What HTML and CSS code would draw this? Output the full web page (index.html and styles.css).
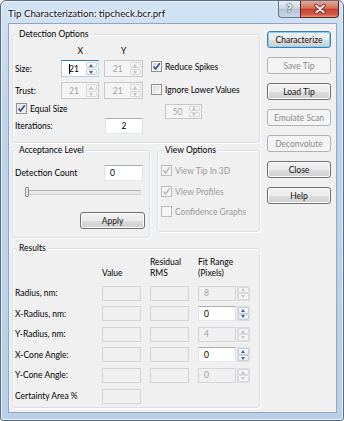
FILE: index.html
```html
<!DOCTYPE html>
<html lang="en">
<head>
    <meta charset="UTF-8">
    <meta name="viewport" content="width=device-width, initial-scale=1.0">
    <title>Tip Characterization</title>
    <link rel="stylesheet" href="styles.css">
</head>
<body>
    <div class="window">
        <div class="titlebar">
            <span class="title">Tip Characterization: tipcheck.bcr.prf</span>
            <div class="caption-buttons">
                <span class="cap-help">?</span>
                <span class="cap-close">
                    <svg width="14" height="10" viewBox="0 0 14 10">
                        <path d="M3 1.5 L11 8.5 M11 1.5 L3 8.5" stroke="#5a1a14" stroke-width="3.4" stroke-linecap="round"/>
                        <path d="M3 1.5 L11 8.5 M11 1.5 L3 8.5" stroke="#ffffff" stroke-width="1.8" stroke-linecap="round"/>
                    </svg>
                </span>
            </div>
        </div>

        <div class="client">
            <div class="main">
                <!-- detection options -->
                <div class="group detection">
                    <div class="group-title">Detection Options</div>
                    <div class="det-body">
                        <div class="det-left">
                            <div class="axis-row">
                                <span class="axis">X</span>
                                <span class="axis">Y</span>
                            </div>
                            <div class="row size-row">
                                <span class="label">Size:</span>
                                <div class="spin focused">
                                    <span class="spin-text"><span class="caret"></span>21</span>
                                    <span class="arrows"><span class="up"></span><span class="down"></span></span>
                                </div>
                                <div class="spin disabled">
                                    <span class="spin-text">21</span>
                                    <span class="arrows"><span class="up"></span><span class="down"></span></span>
                                </div>
                            </div>
                            <div class="row trust-row">
                                <span class="label">Trust:</span>
                                <div class="spin disabled">
                                    <span class="spin-text">21</span>
                                    <span class="arrows"><span class="up"></span><span class="down"></span></span>
                                </div>
                                <div class="spin disabled">
                                    <span class="spin-text">21</span>
                                    <span class="arrows"><span class="up"></span><span class="down"></span></span>
                                </div>
                            </div>
                            <div class="check checked equal-check">
                                <span class="box"><svg width="9" height="9" viewBox="0 0 9 9"><path d="M1.5 4.5 L3.6 7 L7.8 1.2" fill="none" stroke="#3a4f86" stroke-width="1.6"/></svg></span>
                                Equal Size
                            </div>
                            <div class="row iter-row">
                                <span class="label">Iterations:</span>
                                <span class="edit centered">2</span>
                            </div>
                        </div>
                        <div class="det-right">
                            <div class="check checked">
                                <span class="box"><svg width="9" height="9" viewBox="0 0 9 9"><path d="M1.5 4.5 L3.6 7 L7.8 1.2" fill="none" stroke="#3a4f86" stroke-width="1.6"/></svg></span>
                                Reduce Spikes
                            </div>
                            <div class="check ignore-check">
                                <span class="box"></span>
                                Ignore Lower Values
                            </div>
                            <div class="spin disabled low-spin">
                                <span class="spin-text">50</span>
                                <span class="arrows"><span class="up"></span><span class="down"></span></span>
                            </div>
                        </div>
                    </div>
                </div>

                <div class="middle">
                    <!-- acceptance level -->
                    <div class="group acceptance">
                        <div class="group-title">Acceptance Level</div>
                        <div class="row count-row">
                            <span class="label">Detection Count</span>
                            <span class="edit">0</span>
                        </div>
                        <div class="slider">
                            <span class="thumb"></span>
                        </div>
                        <div class="btn apply">Apply</div>
                    </div>

                    <!-- view options -->
                    <div class="group view">
                        <div class="group-title">View Options</div>
                        <div class="check checked disabled">
                            <span class="box"><svg width="9" height="9" viewBox="0 0 9 9"><path d="M1.5 4.5 L3.6 7 L7.8 1.2" fill="none" stroke="#b4b4b4" stroke-width="1.4"/></svg></span>
                            View Tip In 3D
                        </div>
                        <div class="check checked disabled">
                            <span class="box"><svg width="9" height="9" viewBox="0 0 9 9"><path d="M1.5 4.5 L3.6 7 L7.8 1.2" fill="none" stroke="#b4b4b4" stroke-width="1.4"/></svg></span>
                            View Profiles
                        </div>
                        <div class="check disabled">
                            <span class="box"></span>
                            Confidence Graphs
                        </div>
                    </div>
                </div>

                <!-- results -->
                <div class="group results">
                    <div class="group-title">Results</div>
                    <div class="results-grid">
                        <span></span>
                        <span class="col-head">Value</span>
                        <span class="col-head">Residual<br>RMS</span>
                        <span class="col-head fit-head">Fit Range<br>(Pixels)</span>

                        <span class="label">Radius, nm:</span>
                        <span class="edit disabled"></span>
                        <span class="edit disabled"></span>
                        <span class="edit disabled">8</span>
                        <span class="arrows solo disabled"><span class="up"></span><span class="down"></span></span>

                        <span class="label">X-Radius, nm:</span>
                        <span class="edit disabled"></span>
                        <span class="edit disabled"></span>
                        <span class="edit">0</span>
                        <span class="arrows solo"><span class="up"></span><span class="down"></span></span>

                        <span class="label">Y-Radius, nm:</span>
                        <span class="edit disabled"></span>
                        <span class="edit disabled"></span>
                        <span class="edit disabled">4</span>
                        <span class="arrows solo disabled"><span class="up"></span><span class="down"></span></span>

                        <span class="label">X-Cone Angle:</span>
                        <span class="edit disabled"></span>
                        <span class="edit disabled"></span>
                        <span class="edit">0</span>
                        <span class="arrows solo"><span class="up"></span><span class="down"></span></span>

                        <span class="label">Y-Cone Angle:</span>
                        <span class="edit disabled"></span>
                        <span class="edit disabled"></span>
                        <span class="edit disabled">0</span>
                        <span class="arrows solo disabled"><span class="up"></span><span class="down"></span></span>

                        <span class="label">Certainty Area %</span>
                        <span class="edit disabled"></span>
                    </div>
                </div>
            </div>

            <div class="buttons">
                <div class="btn default">Characterize</div>
                <div class="btn disabled">Save Tip</div>
                <div class="btn">Load Tip</div>
                <div class="btn disabled">Emulate Scan</div>
                <div class="btn disabled">Deconvolute</div>
                <div class="btn">Close</div>
                <div class="btn">Help</div>
            </div>
        </div>
    </div>
</body>
</html>
```
FILE: styles.css
```css
* {
    box-sizing: border-box;
}

body {
    margin: 0;
    font-family: 'Lato', sans-serif;
    font-size: 8.5px;
    color: #000000;
    background-color: #ffffff;
}

/* window frame */

.window {
    width: 344px;
    height: 421px;
    border: 1px solid #5d6a7a;
    border-radius: 6px 6px 3px 3px;
    padding: 0 6px 7px 7px;
    background: linear-gradient(#d3e3f5, #bed4ec 25%, #b9d0e9 100%);
    box-shadow: inset 0 0 0 1px #e6f0fb;
}

.titlebar {
    height: 22px;
    display: flex;
    align-items: flex-start;
    justify-content: space-between;
}

.title {
    font-size: 9.7px;
    line-height: 12px;
    margin-top: 6px;
    color: #111111;
    text-shadow: 0 0 4px #ffffff, 0 0 2px #ffffff;
}

.caption-buttons {
    display: flex;
    margin-right: -2px;
}

.cap-help {
    width: 22px;
    height: 17px;
    border: 1px solid #6a7689;
    border-top: none;
    border-right: none;
    border-radius: 0 0 0 4px;
    background: linear-gradient(#e9eff6, #c8d5e4 50%, #b4c4d8 51%, #c9d7e6);
    color: #ffffff;
    font-family: 'DejaVu Sans', sans-serif;
    font-weight: bold;
    font-size: 10px;
    line-height: 15px;
    text-align: center;
    text-shadow: 0 0 1px #3f4a5c, 0 0 1px #3f4a5c, 0 0 2px #3f4a5c;
}

.cap-close {
    width: 39px;
    height: 17px;
    border: 1px solid #5c2620;
    border-top: none;
    border-radius: 0 0 4px 0;
    background: linear-gradient(#e7a596, #d0725f 45%, #c4412f 50%, #d45b44 85%, #e69a7e);
    display: flex;
    align-items: center;
    justify-content: center;
}

.client {
    height: 390px;
    border: 1px solid #8ea6c1;
    background-color: #f0f0f0;
    display: flex;
    padding: 0 5px 0 3px;
}

.main {
    width: 248px;
    padding-top: 10px;
}

.buttons {
    margin-left: 7px;
    width: 64px;
    padding-top: 7px;
    display: flex;
    flex-direction: column;
    gap: 9px;
}

/* group boxes */

.group {
    border: 1px solid #d5dfe5;
    border-radius: 3px;
    box-shadow: inset 1px 1px 0 #ffffff, 1px 1px 0 #ffffff;
    padding: 0 2px;
}

.group-title {
    width: fit-content;
    height: 12px;
    line-height: 12px;
    margin: -7px 0 0 2px;
    padding: 0 2px;
    background-color: #f0f0f0;
}

.detection {
    height: 109px;
}

.det-body {
    display: flex;
    align-items: flex-start;
}

.det-left {
    width: 128px;
    padding-top: 5px;
}

.det-right {
    margin-left: 8px;
    padding-top: 20px;
}

.axis-row {
    display: flex;
    gap: 5px;
    padding-left: 46px;
    height: 12px;
    line-height: 12px;
}

.axis {
    width: 39px;
    text-align: center;
}

.row {
    display: flex;
    align-items: center;
}

.label {
    width: 46px;
    white-space: nowrap;
}

.size-row {
    margin-top: 3px;
    height: 17px;
}

.size-row .spin + .spin,
.trust-row .spin + .spin {
    margin-left: 5px;
}

.trust-row {
    margin-top: 5px;
    height: 17px;
}

.equal-check {
    margin-top: 3px;
    margin-left: 1px;
}

.iter-row {
    margin-top: 3px;
    height: 16px;
}

.iter-row .label {
    width: 90px;
}

.iter-row .edit {
    width: 38px;
    height: 16px;
}

.ignore-check {
    margin-top: 10px;
}

.low-spin {
    margin: 8px 0 0 14px;
    height: 15px !important;
    width: 37px !important;
}

/* inputs */

.spin {
    width: 39px;
    height: 17px;
    display: flex;
    border: 1px solid;
    border-color: #abadb3 #dbdfe6 #e3e9ef #e2e3ea;
    background-color: #ffffff;
}

.spin.focused {
    border-color: #3d7bad #b7d9ed #b5cfe7 #a4c9e3;
}

.spin.disabled {
    border-color: #c6c8cb;
    background-color: #f4f4f4;
    color: #a3a3a3;
}

.spin-text {
    flex: 1;
    display: flex;
    align-items: center;
    justify-content: center;
}

.caret {
    width: 1px;
    height: 10px;
    background-color: #000000;
    margin-right: -1px;
}

.arrows {
    width: 12px;
    display: flex;
    flex-direction: column;
    gap: 1px;
    padding: 1px 1px 1px 0;
}

.arrows .up,
.arrows .down {
    flex: 1;
    border: 1px solid #c5d0dd;
    border-radius: 1px;
    background: linear-gradient(#fafbfd, #e6ebf2);
    position: relative;
}

.arrows .up::after,
.arrows .down::after {
    content: "";
    position: absolute;
    left: 50%;
    top: 50%;
    margin: -1.5px 0 0 -2.5px;
    border-left: 2.5px solid transparent;
    border-right: 2.5px solid transparent;
}

.arrows .up::after {
    border-bottom: 3px solid #4d6185;
}

.arrows .down::after {
    border-top: 3px solid #4d6185;
}

.spin.disabled .arrows .up,
.spin.disabled .arrows .down,
.arrows.disabled .up,
.arrows.disabled .down {
    border-color: #d9d9d9;
    background: #f4f4f4;
}

.spin.disabled .arrows .up::after,
.arrows.disabled .up::after {
    border-bottom-color: #c2c2c2;
}

.spin.disabled .arrows .down::after,
.arrows.disabled .down::after {
    border-top-color: #c2c2c2;
}

.arrows.solo {
    width: 13px;
    height: 15px;
    padding: 0;
    margin-left: -8px;
    border: 1px solid #d9dde3;
    background-color: #f4f4f4;
    gap: 0;
}

.edit {
    height: 15px;
    border: 1px solid;
    border-color: #abadb3 #dbdfe6 #e3e9ef #e2e3ea;
    background-color: #ffffff;
    display: flex;
    align-items: center;
    padding-left: 5px;
}

.edit.centered {
    justify-content: center;
    padding-left: 0;
}

.edit.disabled {
    border-color: #d3d4d6;
    background-color: #f0f0f0;
    color: #a3a3a3;
}

/* checkboxes */

.check {
    display: flex;
    align-items: center;
    height: 13px;
    gap: 3px;
    white-space: nowrap;
}

.check .box {
    width: 11px;
    height: 11px;
    border: 1px solid #8e8f8f;
    background: linear-gradient(135deg, #d6d6d6, #fbfbfb);
    box-shadow: inset 0 0 0 1px #f4f4f4;
    display: flex;
    align-items: center;
    justify-content: center;
}

.check.disabled {
    color: #9a9a9a;
}

.check.disabled .box {
    border-color: #bdbdbd;
    background: #f6f6f6;
}

/* middle row */

.middle {
    display: flex;
    gap: 7px;
    margin-top: 7px;
    align-items: flex-start;
}

.acceptance {
    width: 138px;
    height: 88px;
}

.count-row {
    margin-top: 9px;
    height: 16px;
}

.count-row .label {
    width: 89px;
}

.count-row .edit {
    width: 39px;
    height: 16px;
}

.slider {
    margin: 5px 0 0 10px;
    width: 116px;
    height: 11px;
    display: flex;
    align-items: center;
    position: relative;
}

.slider::before {
    content: "";
    position: absolute;
    left: 0;
    right: 0;
    top: 4px;
    height: 3px;
    border: 1px solid #d6d6d6;
    border-top-color: #b4b4b4;
    background-color: #e7eaea;
    border-radius: 1px;
}

.slider .thumb {
    position: relative;
    width: 4px;
    height: 10px;
    border: 1px solid #8a8a8a;
    border-radius: 1px;
    background: linear-gradient(90deg, #f2f2f2, #d6d6d6);
}

.apply {
    width: 65px;
    margin: 15px 0 0 65px;
}

.view {
    width: 103px;
    height: 82px;
    padding-left: 3px;
}

.view .check {
    margin-top: 8px;
}

.view .check:last-child {
    margin-top: 7px;
}

/* results */

.results {
    margin-top: 10px;
    height: 160px;
}

.results-grid {
    display: grid;
    grid-template-columns: 78px 39px 39px 38px 13px;
    column-gap: 9px;
    row-gap: 5.6px;
    padding-top: 3px;
    align-items: center;
}

.col-head {
    line-height: 11px;
    align-self: end;
    margin-bottom: 1px;
}

.fit-head {
    grid-column: span 2;
}

.results-grid > .label {
    width: auto;
}

/* buttons */

.btn {
    height: 17px;
    border: 1px solid #707070;
    border-radius: 3px;
    background: linear-gradient(#f2f2f2 0%, #ebebeb 50%, #dddddd 51%, #cfcfcf 100%);
    box-shadow: inset 0 0 0 1px #fbfbfb;
    display: flex;
    align-items: center;
    justify-content: center;
    color: #111111;
}

.btn.default {
    border-color: #3c7fb1;
    box-shadow: inset 0 0 0 1px #7fd3f4;
}

.btn.disabled {
    border-color: #adb2b5;
    background: #f4f4f4;
    box-shadow: none;
    color: #8a8a8a;
}
```
